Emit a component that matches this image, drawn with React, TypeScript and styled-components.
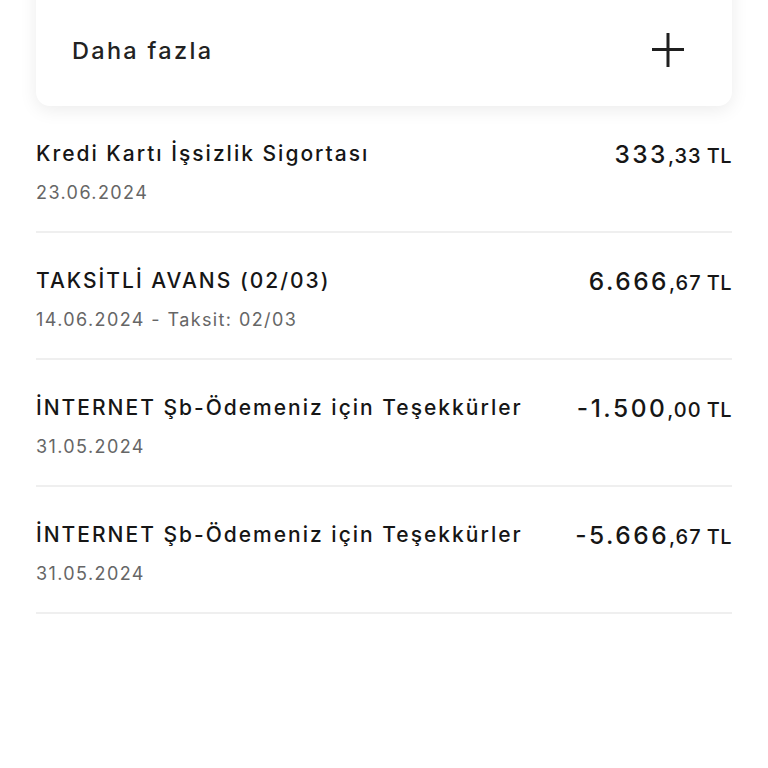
import React from 'react'
import styled, { createGlobalStyle } from 'styled-components'

const GlobalStyle = createGlobalStyle`
  html, body {
    margin: 0;
    padding: 0;
    background: #ffffff;
  }
  body {
    font-family: Inter, "Noto Sans", sans-serif;
    color: #1c1c1c;
  }
`

const Page = styled.div`
  width: 768px;
  height: 768px;
  overflow: hidden;
  padding: 0 36px;
  box-sizing: border-box;
`

const MoreCard = styled.div`
  display: flex;
  align-items: center;
  justify-content: space-between;
  height: 140px;
  margin-top: -34px;
  padding: 28px 48px 0 36px;
  box-sizing: border-box;
  background: #fff;
  border-radius: 14px;
  box-shadow: 0 4px 18px rgba(0, 0, 0, 0.08);
`

const MoreLabel = styled.span`
  font-size: 23.5px;
  font-weight: 500;
  color: #222;
  letter-spacing: 2.3px;
`

const List = styled.div`
  display: flex;
  flex-direction: column;
`

const Row = styled.div`
  display: flex;
  justify-content: space-between;
  align-items: flex-start;
  padding: 35px 0 26px;
  border-bottom: 2px solid #efefef;
`

const Info = styled.div`
  display: flex;
  flex-direction: column;
  gap: 14px;
`

const Title = styled.span`
  font-size: 21px;
  font-weight: 500;
  line-height: 26px;
  color: #161616;
  letter-spacing: 2px;
`

const Sub = styled.span`
  font-size: 18px;
  line-height: 24px;
  color: #666;
  letter-spacing: 1.4px;
`

const Amount = styled.div`
  display: flex;
  align-items: baseline;
  line-height: 26px;
  color: #161616;
  white-space: nowrap;
`

const Whole = styled.span`
  font-size: 24.5px;
  font-weight: 500;
  letter-spacing: 2.5px;
`

const Fraction = styled.span`
  font-size: 20px;
  font-weight: 500;
  letter-spacing: 1px;
`

const Currency = styled.span`
  font-size: 20px;
  font-weight: 500;
  margin-left: 5px;
  letter-spacing: 0.5px;
`

const PlusIcon = () => (
  <svg width="32" height="34" viewBox="0 0 32 34" fill="none">
    <path d="M16 0v34M0 16.5h32" stroke="#1f1f1f" strokeWidth="3" />
  </svg>
)

type Tx = { title: string; sub: string; whole: string; fraction: string }

const transactions: Tx[] = [
  { title: 'Kredi Kartı İşsizlik Sigortası', sub: '23.06.2024', whole: '333', fraction: ',33' },
  { title: 'TAKSİTLİ AVANS (02/03)', sub: '14.06.2024 - Taksit: 02/03', whole: '6.666', fraction: ',67' },
  { title: 'İNTERNET Şb-Ödemeniz için Teşekkürler', sub: '31.05.2024', whole: '-1.500', fraction: ',00' },
  { title: 'İNTERNET Şb-Ödemeniz için Teşekkürler', sub: '31.05.2024', whole: '-5.666', fraction: ',67' },
]

export default function App() {
  return (
    <>
      <GlobalStyle />
      <Page>
        <MoreCard>
          <MoreLabel>Daha fazla</MoreLabel>
          <PlusIcon />
        </MoreCard>
        <List>
          {transactions.map((tx, i) => (
            <Row key={i}>
              <Info>
                <Title>{tx.title}</Title>
                <Sub>{tx.sub}</Sub>
              </Info>
              <Amount>
                <Whole>{tx.whole}</Whole>
                <Fraction>{tx.fraction}</Fraction>
                <Currency>TL</Currency>
              </Amount>
            </Row>
          ))}
        </List>
      </Page>
    </>
  )
}
